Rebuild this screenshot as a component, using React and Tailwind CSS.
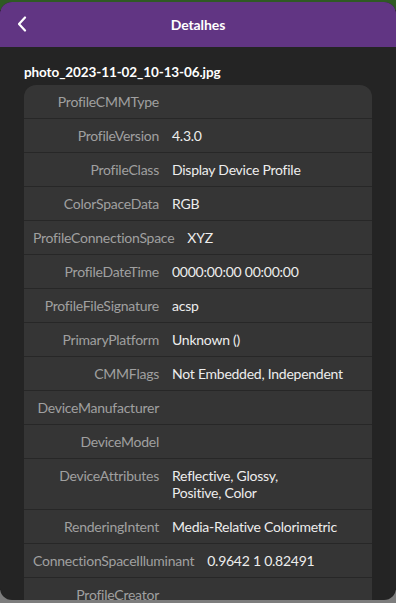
const rows = [
  ['ProfileCMMType', ''],
  ['ProfileVersion', '4.3.0'],
  ['ProfileClass', 'Display Device Profile'],
  ['ColorSpaceData', 'RGB'],
  ['ProfileConnectionSpace', 'XYZ'],
  ['ProfileDateTime', '0000:00:00 00:00:00'],
  ['ProfileFileSignature', 'acsp'],
  ['PrimaryPlatform', 'Unknown ()'],
  ['CMMFlags', 'Not Embedded, Independent'],
  ['DeviceManufacturer', ''],
  ['DeviceModel', ''],
  ['DeviceAttributes', 'Reflective, Glossy,\nPositive, Color'],
  ['RenderingIntent', 'Media-Relative Colorimetric'],
  ['ConnectionSpaceIlluminant', '0.9642 1 0.82491'],
  ['ProfileCreator', ''],
]

export default function App() {
  return (
    <div
      className="h-[603px] w-[396px] overflow-hidden bg-[#7b7b7b] text-[14px]"
      style={{ fontFamily: 'Lato, "Noto Sans", sans-serif', background: 'linear-gradient(#2f5a23 0, #2f5a23 10px, #1c1c1c 10px, #1c1c1c 590px, #7d7d7d 590px)' }}
    >
      <div className="mt-[2px] flex h-[598px] flex-col overflow-hidden rounded-[12px] bg-[#242424]">
        <header className="relative flex h-[45px] shrink-0 items-center justify-center bg-[#613583]">
          <button className="absolute left-[12px] top-[12px] flex h-[20px] w-[20px] items-center justify-center">
            <svg width="12" height="16" viewBox="0 0 12 16" fill="none">
              <path d="M9 1.5L3 8l6 6.5" stroke="#fff" strokeWidth="2.2" strokeLinecap="round" strokeLinejoin="round" />
            </svg>
          </button>
          <h1 className="text-[14px] font-bold tracking-[-0.1px] text-white">Detalhes</h1>
        </header>
        <div className="flex-1 px-[24px]">
          <div className="mt-[15px] mb-[3px] text-[13.5px] font-bold leading-[20px] tracking-[-0.1px] text-white">
            photo_2023-11-02_10-13-06.jpg
          </div>
          <div className="overflow-hidden rounded-[12px] bg-[#353535]">
            {rows.map(([k, v]) => (
              <div key={k} className="flex gap-[13px] border-b border-[#272727] py-[8px] pl-[9px] pr-[12px] leading-[17px] tracking-[-0.25px]">
                <div className="min-w-[126px] shrink-0 text-right text-[#a0a0a0]">{k}</div>
                <div className="whitespace-pre-line text-[#ededed]">{v}</div>
              </div>
            ))}
          </div>
        </div>
      </div>
    </div>
  )
}
